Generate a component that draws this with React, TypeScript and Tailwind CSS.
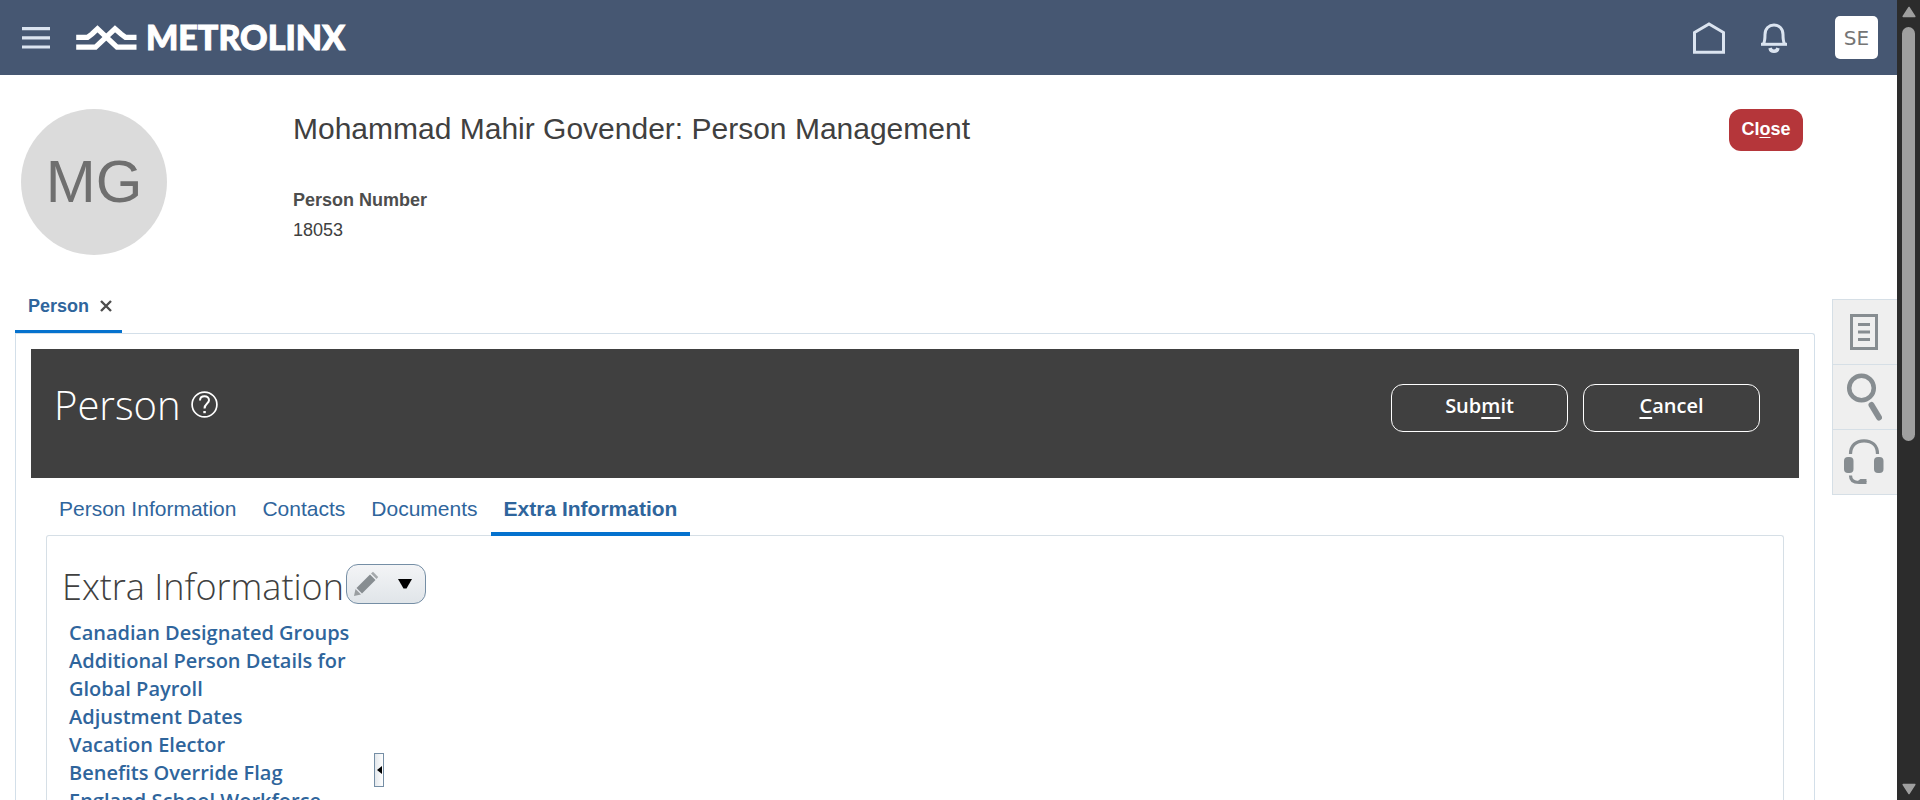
import React from "react";

const links = [
  "Canadian Designated Groups",
  "Additional Person Details for Global Payroll",
  "Adjustment Dates",
  "Vacation Elector",
  "Benefits Override Flag",
  "England School Workforce",
];

const tabs = ["Person Information", "Contacts", "Documents"];

function TopBar() {
  return (
    <header className="flex h-[75px] shrink-0 items-center bg-[#465772] pl-[22px] pr-[19px]">
      <button aria-label="Navigator" className="mr-[26px]">
        <svg width="28" height="22" viewBox="0 0 28 22" className="block" fill="#dbe4f0">
          <path d="M0 0h28v3.2H0zM0 9.200h28v3.200H0zM0 18.400h28v3.200H0z" />
        </svg>
      </button>
      <a href="#home" className="flex items-center gap-[9px] text-white">
        <svg width="61" height="26" viewBox="0 0 61 26" className="block" fill="none" stroke="#fff" strokeWidth="5.200">
          <path d="M.2 12.400H11.500L16 9L21.500 3.800L41 22.200H60.500" />
          <path d="M.2 22.200H19.500L39 3.800L45 9L49.500 12.400H60.500" />
        </svg>
        <span className="pb-[2px] font-['Lato'] text-[34px] leading-[40px] font-black [-webkit-text-stroke:1px_white]">METROLINX</span>
      </a>
      <div className="ml-auto flex items-center">
        <a href="#home" aria-label="Home" className="mr-[36px]">
          <svg width="32" height="32" viewBox="0 0 32 32" className="block" fill="none" stroke="#dbe4f0" strokeWidth="3">
            <path d="M1.500 10.500L16 2L30.500 10.500V30.300H1.500Z" />
          </svg>
        </a>
        <button aria-label="Notifications" className="mr-[48px]">
          <svg width="26" height="30" viewBox="0 0 26 30" className="block" fill="none" stroke="#dbe4f0" strokeWidth="3">
            <path d="M0 21.300H26" />
            <path d="M2.500 21C4 18 4 15 4 11.500C4 5.500 8 2 13 2S22 5.500 22 11.500C22 15 22 18 23.500 21" />
            <path d="M9 25C10 29.300 16 29.300 17 25" strokeWidth="3.500" />
          </svg>
        </button>
        <button className="h-[43px] w-[43px] rounded-[5px] bg-white font-['DejaVu_Sans'] text-[20px] text-[#757575]">SE</button>
      </div>
    </header>
  );
}

function SideRail() {
  const item = "flex h-[65px] w-full items-center justify-center border-b border-[#d6dfe6] pr-[2px]";
  return (
    <aside className="mt-[44px] w-[65px] shrink-0 self-start border-t border-l border-[#d6dfe6] bg-[#efefef]">
      <button aria-label="Notes" className={item}>
        <svg width="28" height="36" viewBox="0 0 28 36" fill="none" stroke="#878d91" strokeWidth="3">
          <path d="M1.500 1.500h25v33h-25zM8 10.500h12M8 18h12M8 25.500h12" />
        </svg>
      </button>
      <button aria-label="Search" className={item}>
        <svg width="36" height="48" viewBox="0 0 36 48" fill="none" stroke="#878d91">
          <circle cx="15.500" cy="15" r="12.300" strokeWidth="4.500" />
          <path d="M25.500 32L33 44.500" strokeWidth="6" strokeLinecap="round" />
        </svg>
      </button>
      <button aria-label="Support" className={item}>
        <svg width="40" height="46" viewBox="0 0 40 46" fill="none" stroke="#878d91" strokeWidth="3.200">
          <path d="M6.500 15C6.500 6.500 12 1.800 20 1.800S33.500 6.500 33.500 15" />
          <rect x="0" y="18" width="9.500" height="16" rx="4" fill="#878d91" stroke="none" />
          <rect x="30" y="18" width="9.500" height="16" rx="4" fill="#878d91" stroke="none" />
          <path d="M6.500 36.500C6.500 41 9.500 43.500 15 43.500H22.500" />
          <path d="M15 43L17 41.500H22.500" />
        </svg>
      </button>
    </aside>
  );
}

function Scrollbar() {
  return (
    <div aria-hidden="true" className="flex w-[23px] shrink-0 flex-col items-center bg-[#2c2c2c] pt-[6px] pb-[5px]">
      <svg width="14" height="12" viewBox="0 0 14 12" className="shrink-0">
        <path d="M7 1.500L12.800 10.500H1.200Z" fill="#9f9f9f" stroke="#9f9f9f" strokeWidth="1.500" strokeLinejoin="round" />
      </svg>
      <div className="mt-[9px] h-[414px] w-[13px] rounded-full bg-[#9f9f9f]" />
      <svg width="14" height="12" viewBox="0 0 14 12" className="mt-auto shrink-0">
        <path d="M7 10.500L12.800 1.500H1.200Z" fill="#9f9f9f" stroke="#9f9f9f" strokeWidth="1.500" strokeLinejoin="round" />
      </svg>
    </div>
  );
}

function ExtraInformation() {
  return (
    <section className="-mt-px min-h-0 flex-1 rounded-t-[3px] border border-b-0 border-[#d6dfe6]">
      <div className="flex h-full">
        <div className="w-[327px] shrink-0">
          <div className="flex items-start pt-[28px] pl-[15px]">
            <h2 className="w-[284px] shrink-0 font-['Open_Sans'] text-[36px] leading-[46px] font-light whitespace-nowrap text-[#404040]">Extra Information</h2>
            <button aria-label="Edit" className="flex h-[40px] w-[80px] shrink-0 items-center gap-[19px] rounded-[12px] border border-[#758ea5] bg-linear-to-b from-[#f3f4f6] to-[#e0e5e9] pl-[6px]">
              <svg width="26" height="26" viewBox="0 0 26 26">
                <path d="M1 25L2.500 18L8 23.500Z" fill="#9a9ea1" />
                <path d="M3.500 17L17 3.500L22.500 9L9 22.500Z" fill="#878d91" />
                <path d="M18 2.500L20 .8L25.200 6L23.500 8Z" fill="#a5a9ac" />
              </svg>
              <svg width="14" height="10" viewBox="0 0 14 10">
                <path d="M0 0H14L8.500 9.500H5.500Z" fill="#000" />
              </svg>
            </button>
          </div>
          <ul className="pt-[9px] pl-[22px] font-['Open_Sans'] text-[20px] leading-7 font-semibold text-[#2f659c]">
            {links.map((l) => (
              <li key={l}>
                <a href="#extra">{l}</a>
              </li>
            ))}
          </ul>
        </div>
        <button aria-label="Collapse pane" className="mt-[217px] flex h-[34px] w-[10px] items-center justify-center border border-[#758ea5] bg-linear-to-r from-[#e4e8ec] to-white">
          <svg width="5" height="8" viewBox="0 0 5 8" className="block shrink-0">
            <path d="M5 0V8L0 4Z" fill="#000" />
          </svg>
        </button>
      </div>
    </section>
  );
}

export default function App() {
  const action = "h-[48px] w-[177px] rounded-[12px] border border-white pb-1";
  return (
    <div className="flex h-screen overflow-hidden bg-white font-['Liberation_Sans',sans-serif]">
      <div className="flex min-w-0 flex-1 flex-col">
        <TopBar />
        <div className="flex shrink-0 items-start pt-[34px] pr-[94px] pl-[21px]">
          <div className="flex h-[146px] w-[146px] items-center justify-center rounded-full bg-[#dbdbdb] text-[60px] text-[#6f6f6f]">MG</div>
          <div className="ml-[126px] flex-1">
            <h1 className="text-[30px] leading-[40px] text-[#404040]">Mohammad Mahir Govender: Person Management</h1>
            <dl className="mt-[36px] text-[18px] leading-[30px] text-[#404040]">
              <dt className="font-bold text-[#4d4d4d]">Person Number</dt>
              <dd>18053</dd>
            </dl>
          </div>
          <button className="h-[42px] w-[74px] rounded-[12px] bg-[#b5363a] pb-[2px] text-[18px] font-bold text-white">
            Cl<u className="underline-offset-2">o</u>se
          </button>
        </div>
        <div className="flex min-h-0 flex-1">
          <div className="mr-[17px] flex min-w-0 flex-1 flex-col pt-8 pl-[15px]">
            <div className="flex h-[47px] w-[107px] shrink-0 items-center gap-[11px] border-b-4 border-[#0572ce] pr-[10px] pb-[5px] pl-[13px] text-[18px] font-bold text-[#2f659c]">
              <a href="#person">Person</a>
              <button aria-label="Close tab">
                <svg width="12" height="12" viewBox="0 0 12 12" className="block" stroke="#4d4d4d" strokeWidth="2.400">
                  <path d="M1 1L11 11M11 1L1 11" />
                </svg>
              </button>
            </div>
            <main className="-mt-px flex min-h-0 flex-1 flex-col rounded-tr-[3px] border border-b-0 border-[#d3dfe9] px-[15px] pt-[15px]">
              <div className="flex h-[129px] shrink-0 items-start bg-[#404040] px-[23px] text-white">
                <h1 className="pt-[26px] font-['Open_Sans'] text-[40px] leading-[60px] font-light">Person</h1>
                <button aria-label="Help" className="mt-[42px] ml-[10px]">
                  <svg width="27" height="27" viewBox="0 0 27 27" className="block" fill="none" stroke="#fff">
                    <circle cx="13.500" cy="13.500" r="12.400" strokeWidth="1.700" />
                    <path d="M9 9.500C9 6.800 11 5.200 13.500 5.200S18 6.800 18 9.300C18 12.500 13.500 12.700 13.500 17.500" strokeWidth="2" />
                    <path d="M12.300 20h2.500v2.200h-2.500z" fill="#fff" stroke="none" />
                  </svg>
                </button>
                <div className="mt-[35px] mr-4 ml-auto flex gap-[15px] font-['Open_Sans'] text-[20px] font-semibold">
                  <button className={action}>
                    Sub<u className="underline-offset-4">m</u>it
                  </button>
                  <button className={action}>
                    <u className="underline-offset-4">C</u>ancel
                  </button>
                </div>
              </div>
              <div className="flex min-h-0 flex-1 flex-col px-[15px]">
                <nav className="flex h-[58px] shrink-0 items-stretch text-[21px] leading-[62px] text-[#2f659c]">
                  {tabs.map((t) => (
                    <a key={t} href="#tab" className="px-[13px]">
                      {t}
                    </a>
                  ))}
                  <a href="#tab" className="z-10 border-b-4 border-[#0572ce] px-[13px] font-bold">
                    Extra Information
                  </a>
                </nav>
                <ExtraInformation />
              </div>
            </main>
          </div>
          <SideRail />
        </div>
      </div>
      <Scrollbar />
    </div>
  );
}
